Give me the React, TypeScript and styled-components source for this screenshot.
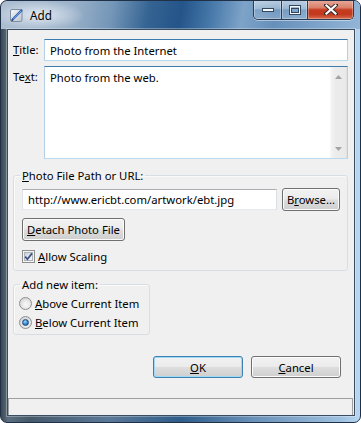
import React from 'react';
import styled, { createGlobalStyle } from 'styled-components';

const GlobalStyle = createGlobalStyle`
  html, body { margin: 0; padding: 0; background: #ffffff; }
  body {
    font-family: "Segoe UI", "Noto Sans", "DejaVu Sans", sans-serif;
    font-size: 11.3px;
    color: #000;
  }
  * { box-sizing: border-box; }
`;

const Window = styled.div`
  width: 361px;
  height: 423px;
  display: flex;
  flex-direction: column;
  border: 1px solid #1f3047;
  border-radius: 7px;
  overflow: hidden;
  background: linear-gradient(90deg, #3d4852 0%, #5b6f80 2%, #46596b 8%, #5a7898 30%, #2f5c8a 50%, #6990b8 70%, #9fc1e1 95%, #b9d7f1 100%);
`;

const TitleBar = styled.div`
  height: 28px;
  flex: none;
  display: flex;
  align-items: center;
  padding: 0 6px 0 8px;
  background:
    radial-gradient(ellipse 46px 15px at 38px 14px, rgba(235, 242, 250, 0.85), rgba(235, 242, 250, 0) 100%),
    linear-gradient(100deg, #adbfd1 0%, #9bb2c9 20%, #7496b8 31%, #356493 41%, #245489 50%, #4577a8 58%, #7ea3c8 67%, #6690bb 76%, #93b5d6 100%);
`;

const TitleIcon = styled.svg`
  width: 15px;
  height: 15px;
  flex: none;
`;

const TitleText = styled.span`
  margin-left: 6px;
  font-size: 11.7px;
  flex: 1;
`;

const CaptionGroup = styled.div`
  align-self: flex-start;
  margin-top: -1px;
  height: 20px;
  display: flex;
  border: 1px solid #2b3d54;
  border-top: none;
  border-radius: 0 0 5px 5px;
  overflow: hidden;
  box-shadow: 0 1px 0 rgba(255, 255, 255, 0.45);
`;

const CaptionButton = styled.div<{ $w: number; $close?: boolean }>`
  width: ${(p) => p.$w}px;
  display: flex;
  align-items: center;
  justify-content: center;
  box-shadow: inset 0 0 0 1px rgba(255, 255, 255, 0.3);
  background: ${(p) =>
    p.$close
      ? 'linear-gradient(#e8ab9d 0%, #d9806a 40%, #c43b20 52%, #c1391e 75%, #d96c50 100%)'
      : 'linear-gradient(rgba(255,255,255,0.55) 0%, rgba(255,255,255,0.32) 45%, rgba(255,255,255,0.08) 52%, rgba(255,255,255,0.18) 100%)'};
  & + & {
    border-left: 1px solid #2b3d54;
  }
`;

const Client = styled.div`
  flex: 1;
  margin: 0 5px 6px 6px;
  border: 1px solid #3a4c60;
  box-shadow: 0 0 0 1px rgba(255, 255, 255, 0.3);
  background: #f0f0f0;
  display: flex;
  flex-direction: column;
`;

const Form = styled.div`
  flex: 1;
  display: flex;
  flex-direction: column;
  padding: 9px 6px 0 5px;
`;

const FieldRow = styled.div<{ $gap?: number }>`
  display: flex;
  align-items: flex-start;
  margin-top: ${(p) => p.$gap ?? 0}px;
`;

const FieldLabel = styled.label`
  width: 31px;
  flex: none;
  line-height: 15px;
  padding-top: 3px;
`;

const Key = styled.span`
  text-decoration: underline;
  text-underline-offset: 1px;
`;

const TextBox = styled.input<{ $focus?: boolean }>`
  flex: 1;
  min-width: 0;
  height: ${(p) => (p.$focus ? 22 : 21)}px;
  border: 1px solid;
  border-color: ${(p) =>
    p.$focus ? '#3d7bad #b5cfe7 #b7d9ed #b5cfe7' : '#abadb3 #dbdfe6 #e3e9ef #e2e3ea'};
  background: #fff;
  padding: 0 5px;
  font: inherit;
  color: #000;
  outline: none;
`;

const MemoBox = styled.div`
  flex: 1;
  height: 93px;
  display: flex;
  border: 1px solid;
  border-color: #3d7bad #b5cfe7 #b7d9ed #b5cfe7;
  background: #fff;
`;

const Memo = styled.textarea`
  flex: 1;
  border: none;
  resize: none;
  overflow: hidden;
  padding: 3px 5px;
  font: inherit;
  line-height: 15px;
  color: #000;
  outline: none;
  background: transparent;
`;

const ScrollBar = styled.div`
  width: 17px;
  flex: none;
  display: flex;
  flex-direction: column;
  justify-content: space-between;
  align-items: center;
  padding: 8px 0 7px;
  background: linear-gradient(90deg, #f4f4f4 0%, #ececec 30%, #e9e9e9 100%);
  border-left: 1px solid #f7f7f7;
  border-right: 1px solid #e2e2e2;
`;

const GroupBox = styled.fieldset<{ $width?: number; $top: number }>`
  margin: ${(p) => p.$top}px 0 0 0;
  min-width: 0;
  width: ${(p) => (p.$width ? `${p.$width}px` : 'auto')};
  align-self: ${(p) => (p.$width ? 'flex-start' : 'stretch')};
  border: 1px solid #d5dfe5;
  border-radius: 3px;
  box-shadow: inset 1px 1px 0 #fafafa;
`;

const GroupLegend = styled.legend<{ $shift: number }>`
  padding: 0 2px;
  margin-left: ${(p) => p.$shift}px;
  line-height: 15px;
`;

const PhotoGroup = styled(GroupBox)`
  padding: 5px 7px 6px 8px;
`;

const ItemGroup = styled(GroupBox)`
  padding: 3px 5px 4px 5px;
`;

const GroupBody = styled.div`
  display: flex;
  flex-direction: column;
`;

const UrlRow = styled.div`
  display: flex;
  align-items: center;
  gap: 5px;
`;

const Button = styled.button<{ $w: number; $h?: number; $default?: boolean; $top?: number }>`
  width: ${(p) => p.$w}px;
  height: ${(p) => p.$h ?? 23}px;
  flex: none;
  margin-top: ${(p) => p.$top ?? 0}px;
  padding: 0;
  font: inherit;
  color: #000;
  border: 1px solid ${(p) => (p.$default ? '#3c7fb1' : '#707070')};
  border-radius: 3px;
  box-shadow: inset 0 0 0 1px ${(p) => (p.$default ? '#9fdaf6' : '#fbfbfb')};
  background: linear-gradient(#f2f2f2 0%, #ebebeb 48%, #dddddd 52%, #cfcfcf 100%);
  line-height: 15px;
  align-self: flex-start;
`;

const CheckRow = styled.div<{ $top: number }>`
  display: flex;
  align-items: center;
  gap: 3px;
  height: 16px;
  margin-top: ${(p) => p.$top}px;
  line-height: 15px;
`;

const CheckBox = styled.span`
  width: 13px;
  height: 13px;
  flex: none;
  position: relative;
  border: 1px solid #8e8f8f;
  background: #f4f4f4;
  padding: 1px;
  display: flex;
`;

const CheckInner = styled.span`
  flex: 1;
  border: 1px solid #aeb3b9;
  background: linear-gradient(135deg, #cbcfd5 0%, #e6e8eb 55%, #f6f6f6 100%);
`;

const CheckMark = styled.svg`
  position: absolute;
  left: 0;
  top: 0;
  width: 11px;
  height: 11px;
`;

const Radio = styled.span`
  width: 13px;
  height: 13px;
  flex: none;
  border-radius: 50%;
  border: 1px solid #8e8f8f;
  background: radial-gradient(circle at 55% 60%, #fafafa 0%, #e2e2e2 55%, #cfcfcf 80%, #f3f3f3 100%);
  display: flex;
  align-items: center;
  justify-content: center;
`;

const RadioDot = styled.span`
  width: 7px;
  height: 7px;
  border-radius: 50%;
  border: 1px solid #1c4d7e;
  background: radial-gradient(circle at 40% 35%, #a6dcff 0%, #3e92d6 45%, #17558f 100%);
`;

const ButtonRow = styled.div`
  display: flex;
  justify-content: flex-end;
  gap: 8px;
  margin-top: 21px;
  padding-right: 7px;
`;

const StatusBar = styled.div`
  flex: none;
  height: 17px;
  margin-right: 1px;
  border-top: 1px solid #a0a0a0;
  border-left: 1px solid #a0a0a0;
  border-right: 1px solid #a0a0a0;
  background: #f0f0f0;
`;

const ArrowUp = () => (
  <svg width="7" height="4" viewBox="0 0 7 4">
    <path d="M0 4 L3.5 0 L7 4 Z" fill="#a3a3a3" />
  </svg>
);

const ArrowDown = () => (
  <svg width="7" height="4" viewBox="0 0 7 4">
    <path d="M0 0 L7 0 L3.5 4 Z" fill="#a3a3a3" />
  </svg>
);

export default function App() {
  return (
    <>
      <GlobalStyle />
      <Window>
        <TitleBar>
          <TitleIcon viewBox="0 0 15 15">
            <defs>
              <linearGradient id="paper" x1="0" y1="0" x2="1" y2="1">
                <stop offset="0" stopColor="#f7f9fb" />
                <stop offset="1" stopColor="#b9c3ce" />
              </linearGradient>
            </defs>
            <rect x="1.5" y="1.5" width="11.5" height="12" rx="1.5" fill="url(#paper)" stroke="#7f8da0" />
            <path d="M3.6 11.6 L12.4 2.4" stroke="#2a5db4" strokeWidth="2.2" strokeLinecap="round" />
            <path d="M4.2 11.2 L12 3" stroke="#a9cdf5" strokeWidth="0.7" />
            <path d="M2.2 13.2 L3 11.2 L4.3 12.4 Z" fill="#28344a" />
          </TitleIcon>
          <TitleText>Add</TitleText>
          <CaptionGroup>
            <CaptionButton $w={27}>
              <svg width="12" height="4" viewBox="0 0 12 4">
                <rect x="0.5" y="0.5" width="11" height="3" fill="#f4f7fb" stroke="#34475e" />
              </svg>
            </CaptionButton>
            <CaptionButton $w={26}>
              <svg width="12" height="10" viewBox="0 0 12 10">
                <rect x="0.5" y="0.5" width="11" height="9" fill="none" stroke="#34475e" />
                <rect x="1.5" y="1.5" width="9" height="7" fill="none" stroke="#f4f7fb" />
                <rect x="2.5" y="3.5" width="7" height="4" fill="none" stroke="#34475e" />
              </svg>
            </CaptionButton>
            <CaptionButton $w={46} $close>
              <svg width="14" height="11" viewBox="0 0 14 11">
                <path d="M2 1 L12 10 M12 1 L2 10" stroke="#3b2b2b" strokeWidth="4" strokeLinecap="square" />
                <path d="M2.5 1.5 L11.5 9.5 M11.5 1.5 L2.5 9.5" stroke="#ffffff" strokeWidth="2.2" strokeLinecap="square" />
              </svg>
            </CaptionButton>
          </CaptionGroup>
        </TitleBar>
        <Client>
          <Form>
            <FieldRow>
              <FieldLabel>
                <Key>T</Key>itle:
              </FieldLabel>
              <TextBox $focus defaultValue="Photo from the Internet" />
            </FieldRow>
            <FieldRow $gap={5}>
              <FieldLabel>
                Te<Key>x</Key>t:
              </FieldLabel>
              <MemoBox>
                <Memo defaultValue="Photo from the web." />
                <ScrollBar>
                  <ArrowUp />
                  <ArrowDown />
                </ScrollBar>
              </MemoBox>
            </FieldRow>

            <PhotoGroup $top={9}>
              <GroupLegend $shift={-2}>
                <Key>P</Key>hoto File Path or URL:
              </GroupLegend>
              <GroupBody>
                <UrlRow>
                  <TextBox defaultValue="http://www.ericbt.com/artwork/ebt.jpg" />
                  <Button $w={58}>
                    B<Key>r</Key>owse...
                  </Button>
                </UrlRow>
                <Button $w={103} $top={7}>
                  <Key>D</Key>etach Photo File
                </Button>
                <CheckRow $top={7}>
                  <CheckBox>
                    <CheckInner />
                    <CheckMark viewBox="0 0 11 11">
                      <path d="M2.2 5.6 L4.4 8.2 L9 2.4" fill="none" stroke="#3a4f86" strokeWidth="1.7" />
                    </CheckMark>
                  </CheckBox>
                  <span>
                    <Key>A</Key>llow Scaling
                  </span>
                </CheckRow>
              </GroupBody>
            </PhotoGroup>

            <ItemGroup $top={6} $width={137}>
              <GroupLegend $shift={1}>Add new item:</GroupLegend>
              <GroupBody>
                <CheckRow $top={0}>
                  <Radio />
                  <span>
                    <Key>A</Key>bove Current Item
                  </span>
                </CheckRow>
                <CheckRow $top={3}>
                  <Radio>
                    <RadioDot />
                  </Radio>
                  <span>
                    <Key>B</Key>elow Current Item
                  </span>
                </CheckRow>
              </GroupBody>
            </ItemGroup>

            <ButtonRow>
              <Button $w={90} $h={22} $default>
                <Key>O</Key>K
              </Button>
              <Button $w={90} $h={22}>
                <Key>C</Key>ancel
              </Button>
            </ButtonRow>
          </Form>
          <StatusBar />
        </Client>
      </Window>
    </>
  );
}
